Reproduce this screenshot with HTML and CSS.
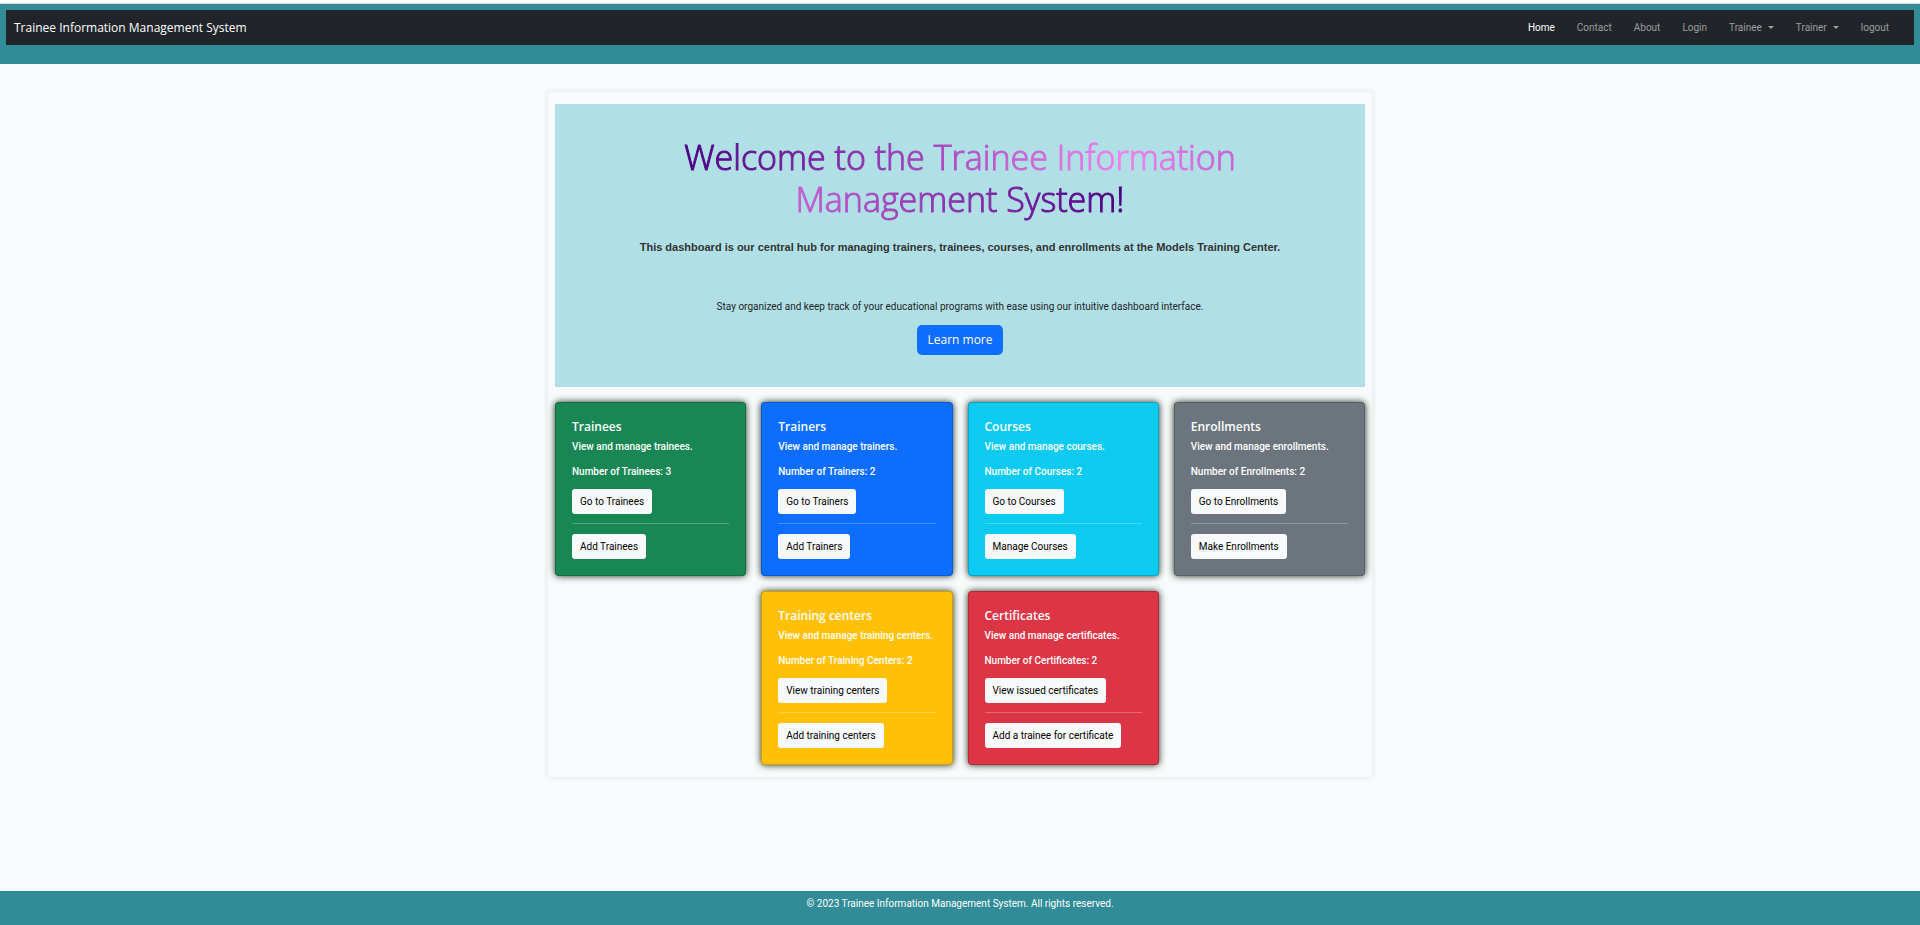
FILE: index.html
```html
<!DOCTYPE html>
<html lang="en">
<head>
<meta charset="utf-8">
<title>Trainee Information Management System</title>
<link rel="stylesheet" href="styles.css">
</head>
<body>
<header class="site-header">
  <nav class="navbar">
    <a class="brand" href="#">Trainee Information Management System</a>
    <ul class="nav-links">
      <li><a class="nav-link active" href="#">Home</a></li>
      <li><a class="nav-link" href="#">Contact</a></li>
      <li><a class="nav-link" href="#">About</a></li>
      <li><a class="nav-link" href="#">Login</a></li>
      <li><a class="nav-link dropdown" href="#">Trainee</a></li>
      <li><a class="nav-link dropdown" href="#">Trainer</a></li>
      <li><a class="nav-link" href="#">logout</a></li>
    </ul>
  </nav>
</header>
<main class="dashboard">
  <section class="hero">
    <h1 class="hero-title"><span class="gradient-text">Welcome to the Trainee Information Management System!</span></h1>
    <p class="lead">This dashboard is our central hub for managing trainers, trainees, courses, and enrollments at the Models Training Center.</p>
    <p class="hero-note">Stay organized and keep track of your educational programs with ease using our intuitive dashboard interface.</p>
    <a class="btn-primary" href="#">Learn more</a>
  </section>
  <section class="cards">
    <article class="card green">
      <h2 class="card-title">Trainees</h2>
      <p class="card-text">View and manage trainees.</p>
      <p class="card-text">Number of Trainees: 3</p>
      <a class="btn" href="#">Go to Trainees</a>
      <hr class="rule">
      <a class="btn" href="#">Add Trainees</a>
    </article>
    <article class="card blue">
      <h2 class="card-title">Trainers</h2>
      <p class="card-text">View and manage trainers.</p>
      <p class="card-text">Number of Trainers: 2</p>
      <a class="btn" href="#">Go to Trainers</a>
      <hr class="rule">
      <a class="btn" href="#">Add Trainers</a>
    </article>
    <article class="card cyan">
      <h2 class="card-title">Courses</h2>
      <p class="card-text">View and manage courses.</p>
      <p class="card-text">Number of Courses: 2</p>
      <a class="btn" href="#">Go to Courses</a>
      <hr class="rule">
      <a class="btn" href="#">Manage Courses</a>
    </article>
    <article class="card gray">
      <h2 class="card-title">Enrollments</h2>
      <p class="card-text">View and manage enrollments.</p>
      <p class="card-text">Number of Enrollments: 2</p>
      <a class="btn" href="#">Go to Enrollments</a>
      <hr class="rule">
      <a class="btn" href="#">Make Enrollments</a>
    </article>
    <article class="card yellow">
      <h2 class="card-title">Training centers</h2>
      <p class="card-text">View and manage training centers.</p>
      <p class="card-text">Number of Training Centers: 2</p>
      <a class="btn" href="#">View training centers</a>
      <hr class="rule">
      <a class="btn" href="#">Add training centers</a>
    </article>
    <article class="card red">
      <h2 class="card-title">Certificates</h2>
      <p class="card-text">View and manage certificates.</p>
      <p class="card-text">Number of Certificates: 2</p>
      <a class="btn" href="#">View issued certificates</a>
      <hr class="rule">
      <a class="btn" href="#">Add a trainee for certificate</a>
    </article>
  </section>
</main>
<footer class="site-footer">© 2023 Trainee Information Management System. All rights reserved.</footer>
</body>
</html>
```
FILE: styles.css
```css
* { box-sizing: border-box; }
body {
  margin: 0;
  min-height: 100vh;
  display: flex;
  flex-direction: column;
  background: #f8fafc;
  color: #212529;
  font-family: Roboto, "Open Sans", sans-serif;
  font-size: 10px;
  line-height: 16px;
}
h1, h2, p, ul { margin: 0; padding: 0; }
a { text-decoration: none; }

.site-header {
  border-top: 3px solid #fff;
  background: #318c97;
  padding: 7px 6px 19px;
  box-shadow: inset 0 1px 0 #d5d9dc;
}
.navbar {
  display: flex;
  align-items: center;
  justify-content: space-between;
  min-height: 35px;
  padding: 0 25px 0 8px;
  background: #212529;
}
.brand, .hero-title, .btn-primary, .card-title { font-family: "Open Sans", "Noto Sans", sans-serif; }
.brand { color: #fff; font-size: 12px; }
.nav-links { display: flex; gap: 22px; list-style: none; }
.nav-link { color: #9b9d9f; }
.nav-link.active { color: #fff; }
.dropdown::after {
  content: "";
  display: inline-block;
  margin-left: 6px;
  vertical-align: 2px;
  border-top: 3px solid;
  border-right: 3px solid transparent;
  border-left: 3px solid transparent;
}

.dashboard {
  width: 100%;
  max-width: 824px;
  margin: 28px auto 0;
  padding: 12px 7px;
  border-radius: 4px;
  box-shadow: 0 0 7px rgba(0, 0, 0, 0.1);
}
.hero {
  padding: 32px;
  background: #b0e0e6;
  text-align: center;
}
.hero-title {
  max-width: 640px;
  margin: 0 auto 18px;
  font-size: 34px;
  font-weight: 300;
  line-height: 42px;
}
.gradient-text {
  background: linear-gradient(to right, indigo, violet, indigo);
  -webkit-background-clip: text;
  background-clip: text;
  color: transparent;
  -webkit-text-stroke: 1px transparent;
}
.lead {
  margin-bottom: 43px;
  color: #333;
  font-family: "Liberation Sans", Arial, sans-serif;
  font-size: 11px;
  font-weight: 700;
  line-height: 18px;
}
.hero-note { margin-bottom: 10px; }
.btn-primary {
  display: inline-block;
  padding: 6px 10px;
  border-radius: 5px;
  background: #0d6efd;
  color: #fff;
  font-size: 12px;
  line-height: 18px;
  vertical-align: top;
}

.cards {
  display: flex;
  flex-wrap: wrap;
  justify-content: center;
  gap: 15px;
  margin-top: 15px;
}
.card {
  width: calc((100% - 45px) / 4);
  padding: 16px;
  border: 1px solid rgba(0, 0, 0, 0.18);
  border-radius: 4px;
  box-shadow: 0 0 7px #1b2e15;
  color: #fff;
}
.green { background-color: #198754; }
.blue { background-color: #0d6efd; }
.cyan { background-color: #0dcaf0; }
.gray { background-color: #6c757d; }
.yellow { background-color: #ffc107; }
.red { background-color: #dc3545; }
.card-title {
  margin-bottom: 5px;
  font-size: 12px;
  font-weight: 600;
  line-height: 15px;
}
.card-text { margin-bottom: 9px; font-weight: 500; white-space: nowrap; }
.btn {
  display: inline-block;
  padding: 5px 8px 4px;
  border-radius: 3px;
  background: #f8f9fa;
  color: #000;
  vertical-align: top;
}
.rule {
  height: 1px;
  margin: 9px 0 10px;
  border: 0;
  background: rgba(255, 255, 255, 0.25);
}

.site-footer {
  margin-top: auto;
  padding: 5px 0 13px;
  background: #318c97;
  color: #fff;
  text-align: center;
}
```
